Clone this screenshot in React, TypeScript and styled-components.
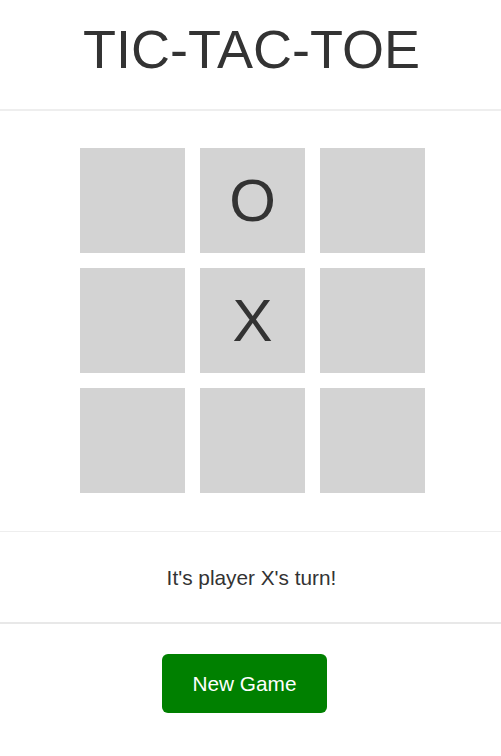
import React, { useState } from "react";
import styled, { createGlobalStyle } from "styled-components";

const Global = createGlobalStyle`
  html, body { margin: 0; padding: 0; background: #ffffff; }
  body { font-family: "Liberation Sans", Arial, sans-serif; color: #333333; }
`;

const Page = styled.div`
  width: 501px;
  display: flex;
  flex-direction: column;
`;

const Header = styled.header`
  padding: 17px 0 28px 2px;
  border-bottom: 2px solid #eeeeee;
  display: flex;
  justify-content: center;
`;

const Title = styled.h1`
  margin: 0;
  font-size: 54px;
  line-height: 64px;
  font-weight: 400;
  color: #333333;
`;

const BoardSection = styled.section`
  padding: 37px 0 38px 4px;
  border-bottom: 1px solid #eeeeee;
  display: flex;
  justify-content: center;
`;

const Board = styled.div`
  display: grid;
  grid-template-columns: repeat(3, 105px);
  grid-auto-rows: 105px;
  gap: 15px;
`;

const Cell = styled.button`
  border: none;
  padding: 0;
  margin: 0;
  background: #d3d3d3;
  font-family: "Liberation Sans", Arial, sans-serif;
  font-size: 60px;
  color: #333333;
  display: flex;
  align-items: center;
  justify-content: center;
  cursor: pointer;
`;

const StatusSection = styled.section`
  padding: 34px 0 33px 2px;
  border-bottom: 2px solid #e8e8e8;
  display: flex;
  justify-content: center;
`;

const Status = styled.p`
  margin: 0;
  font-size: 20.8px;
  line-height: 23px;
  color: #333333;
`;

const Footer = styled.section`
  padding: 30px 12px 40px 0;
  display: flex;
  justify-content: center;
`;

const NewGame = styled.button`
  width: 165px;
  height: 59px;
  border: none;
  border-radius: 6px;
  background: #008000;
  color: #ffffff;
  font-family: "Liberation Sans", Arial, sans-serif;
  font-size: 20.8px;
  cursor: pointer;
`;

const initial: string[] = ["", "O", "", "", "X", "", "", "", ""];

export default function App() {
  const [cells] = useState<string[]>(initial);
  return (
    <Page>
      <Global />
      <Header>
        <Title>TIC-TAC-TOE</Title>
      </Header>
      <BoardSection>
        <Board>
          {cells.map((c, i) => (
            <Cell key={i}>{c}</Cell>
          ))}
        </Board>
      </BoardSection>
      <StatusSection>
        <Status>It's player X's turn!</Status>
      </StatusSection>
      <Footer>
        <NewGame>New Game</NewGame>
      </Footer>
    </Page>
  );
}
